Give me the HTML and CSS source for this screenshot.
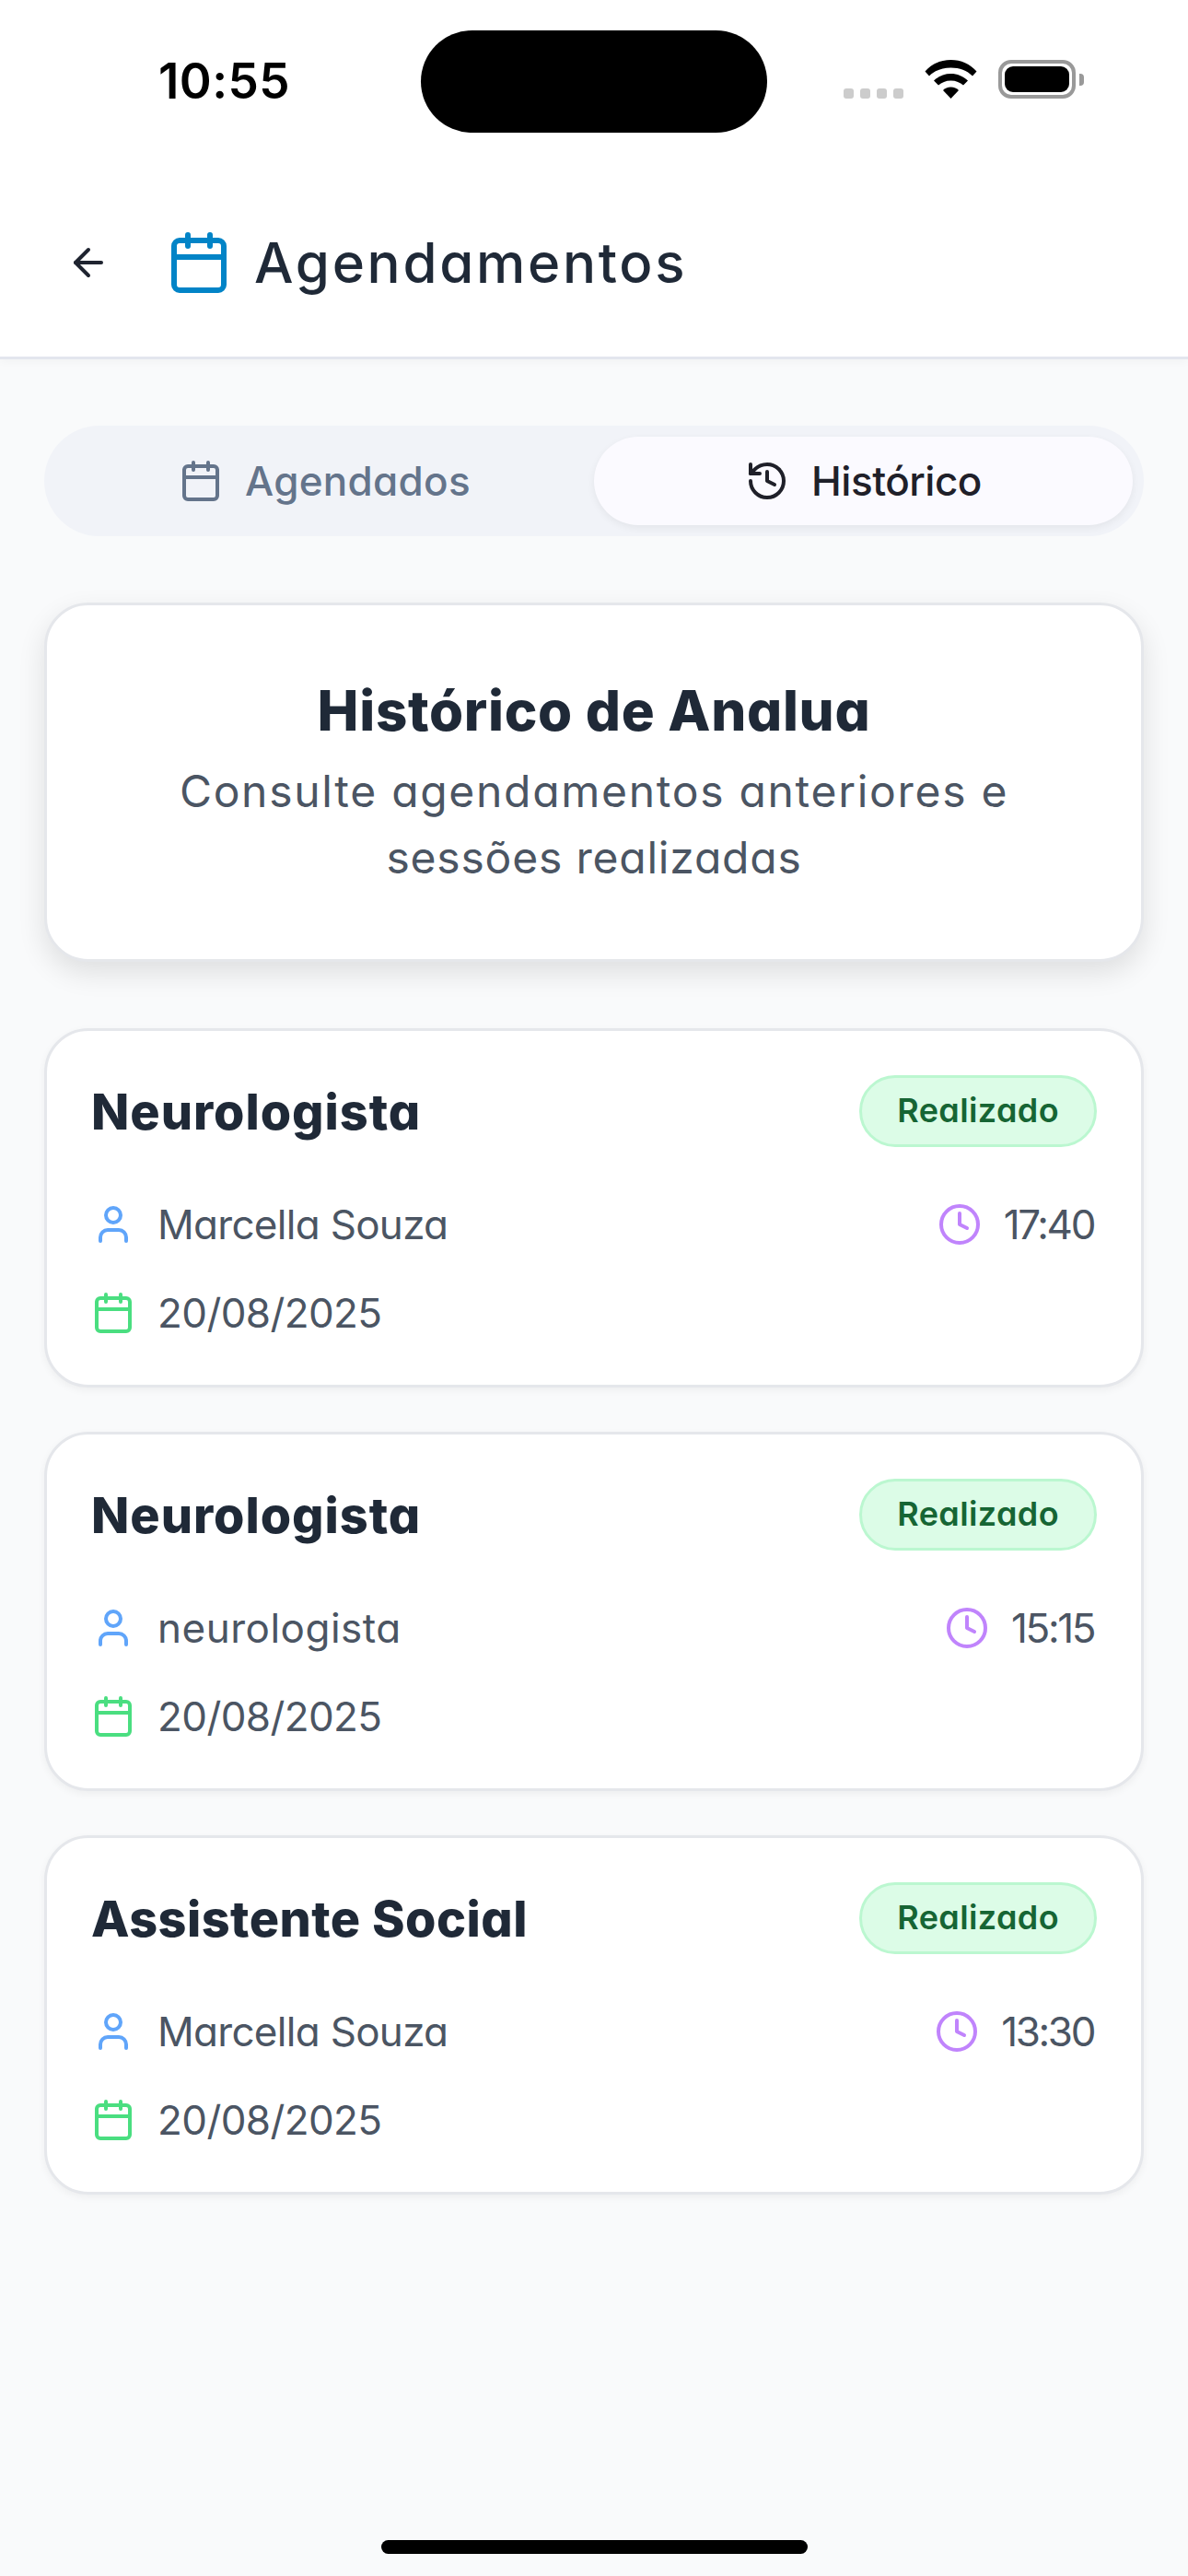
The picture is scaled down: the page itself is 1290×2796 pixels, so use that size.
FILE: index.html
```html
<!DOCTYPE html>
<html lang="pt-BR">
<head>
<meta charset="utf-8">
<title>Agendamentos</title>
<link rel="stylesheet" href="styles.css">
</head>
<body>
<svg class="defs" width="0" height="0" aria-hidden="true">
  <symbol id="i-cal" viewBox="0 0 24 24"><path d="M8 2v4M16 2v4"/><rect x="3" y="4" width="18" height="18" rx="2"/><path d="M3 10h18"/></symbol>
  <symbol id="i-user" viewBox="0 0 24 24"><path d="M19 21v-2a4 4 0 0 0-4-4H9a4 4 0 0 0-4 4v2"/><circle cx="12" cy="7" r="4"/></symbol>
  <symbol id="i-clock" viewBox="0 0 24 24"><circle cx="12" cy="12" r="10"/><path d="M12 6v6l4 2"/></symbol>
  <symbol id="i-hist" viewBox="0 0 24 24"><path d="M3 12a9 9 0 1 0 9-9 9.75 9.75 0 0 0-6.74 2.74L3 8"/><path d="M3 3v5h5"/><path d="M12 7v5l4 2"/></symbol>
  <symbol id="i-back" viewBox="0 0 24 24"><path d="M12 19l-7-7 7-7"/><path d="M19 12H5"/></symbol>
</svg>
<div class="page">
  <header class="top">
    <div class="status">
      <span class="time">10:55</span>
      <div class="island"></div>
      <div class="sys">
        <div class="dots"><i></i><i></i><i></i><i></i></div>
        <svg class="wifi" width="57" height="42" viewBox="0 0 57 42"><path d="M28.5 0C17.5 0 7.5 4.5.5 12.5L5 17.5C11 11.5 19 8.5 28.5 8.5S46 11.500 52 17.5L56.500 12.500C49.500 4.500 39.500 0 28.500 0Z"/><path d="M28.500 15C21.500 15 15.500 17.500 10 22.500L15 27.500C18.500 24.500 23 22.500 28.500 22.500S38.500 24.500 42 27.500L47 22.500C41.500 17.500 35.500 15 28.500 15Z"/><path d="M28.500 29.500C25 29.500 22 31 20 33L28.500 42 37 33C35 31 32 29.500 28.500 29.500Z"/></svg>
        <div class="battery"><div class="battery-fill"></div><div class="battery-nub"></div></div>
      </div>
    </div>
    <div class="appbar">
      <svg class="ic ic-back"><use href="#i-back"/></svg>
      <svg class="ic ic-title"><use href="#i-cal"/></svg>
      <h1 class="page-title">Agendamentos</h1>
    </div>
  </header>

  <main class="content">
    <div class="tabs">
      <div class="tab">
        <svg class="ic ic-row"><use href="#i-cal"/></svg>
        <span class="tab-label tab-label-a">Agendados</span>
      </div>
      <div class="tab tab-active">
        <svg class="ic ic-row"><use href="#i-hist"/></svg>
        <span class="tab-label tab-label-h">Histórico</span>
      </div>
    </div>

    <section class="hero">
      <h2 class="hero-title">Histórico de Analua</h2>
      <p class="hero-sub">Consulte agendamentos anteriores e<br><span class="hero-sub-2">sessões realizadas</span></p>
    </section>

    <div class="list">
      <article class="card">
        <div class="card-head"><h3 class="card-title card-title-neuro">Neurologista</h3><span class="badge">Realizado</span></div>
        <div class="rows">
          <div class="row">
            <div class="meta"><svg class="ic ic-row c-blue"><use href="#i-user"/></svg><span class="meta-text t-name">Marcella Souza</span></div>
            <div class="meta"><svg class="ic ic-row c-purple"><use href="#i-clock"/></svg><span class="meta-text t-time">17:40</span></div>
          </div>
          <div class="row">
            <div class="meta"><svg class="ic ic-row c-green"><use href="#i-cal"/></svg><span class="meta-text t-date">20/08/2025</span></div>
          </div>
        </div>
      </article>

      <article class="card">
        <div class="card-head"><h3 class="card-title card-title-neuro">Neurologista</h3><span class="badge">Realizado</span></div>
        <div class="rows">
          <div class="row">
            <div class="meta"><svg class="ic ic-row c-blue"><use href="#i-user"/></svg><span class="meta-text t-lower">neurologista</span></div>
            <div class="meta"><svg class="ic ic-row c-purple"><use href="#i-clock"/></svg><span class="meta-text t-time">15:15</span></div>
          </div>
          <div class="row">
            <div class="meta"><svg class="ic ic-row c-green"><use href="#i-cal"/></svg><span class="meta-text t-date">20/08/2025</span></div>
          </div>
        </div>
      </article>

      <article class="card">
        <div class="card-head"><h3 class="card-title">Assistente Social</h3><span class="badge">Realizado</span></div>
        <div class="rows">
          <div class="row">
            <div class="meta"><svg class="ic ic-row c-blue"><use href="#i-user"/></svg><span class="meta-text t-name">Marcella Souza</span></div>
            <div class="meta"><svg class="ic ic-row c-purple"><use href="#i-clock"/></svg><span class="meta-text t-time">13:30</span></div>
          </div>
          <div class="row">
            <div class="meta"><svg class="ic ic-row c-green"><use href="#i-cal"/></svg><span class="meta-text t-date">20/08/2025</span></div>
          </div>
        </div>
      </article>
    </div>
  </main>

  <div class="home-wrap"><div class="home-bar"></div></div>
</div>
</body>
</html>
```

FILE: styles.css
```css
* { box-sizing: border-box; }
html, body { margin: 0; padding: 0; }
body {
  background: #f9fafb;
  font-family: "Inter", "Noto Sans", sans-serif;
  font-feature-settings: "cv11" 1;
  color: #1f2937;
}
.defs { position: absolute; }
.page { display: flex; flex-direction: column; width: 1290px; height: 2796px; overflow: hidden; }

.top { position: relative; background: #fff; border-bottom: 3px solid #e3e6ee; height: 390px; flex: none; box-shadow: 0 3px 9px rgba(0, 0, 0, .03); }
.status { display: flex; align-items: flex-start; height: 183px; padding-left: 172px; }
.time { width: 285px; margin-top: 58px; font-size: 53px; line-height: 60px; font-weight: 600; color: #000; letter-spacing: .4px; font-feature-settings: normal; }
.island { width: 376px; height: 111px; margin-top: 33px; border-radius: 56px; background: #000; }
.sys { display: flex; align-items: flex-end; gap: 23px; margin-top: 65px; margin-left: 83px; }
.dots { display: flex; gap: 7px; }
.dots i { display: block; width: 11px; height: 11px; border-radius: 3px; background: #ccc; }
.wifi { display: block; fill: #000; }
.battery { position: relative; width: 84px; height: 42px; border: 4px solid #999; border-radius: 14px; padding: 3px 3px; }
.battery-fill { height: 100%; background: #000; border-radius: 9px; }
.battery-nub { position: absolute; left: 84px; top: 11px; width: 5px; height: 13px; background: #999; border-radius: 0 4px 4px 0; }

.appbar { display: flex; align-items: center; height: 204px; padding-left: 72px; }
.ic { display: block; flex: none; fill: none; stroke: currentColor; stroke-width: 2; stroke-linecap: round; stroke-linejoin: round; }
.ic-back { width: 48px; height: 48px; color: #1f2430; }
.ic-title { width: 72px; height: 72px; margin-left: 60px; color: #0284c7; }
.page-title { margin: 0 0 0 24px; font-size: 60px; line-height: 84px; font-weight: 500; color: #1f2937; letter-spacing: 2.7px; }

.content { flex: 1; padding: 72px 48px 0; }
.tabs { display: grid; grid-template-columns: 1fr 1fr; height: 120px; padding: 12px; border-radius: 60px; background: #f1f3f8; }
.tab { display: flex; align-items: center; justify-content: center; gap: 24px; border-radius: 48px; color: #64748b; }
.tab-active { background: #fbfaff; color: #1f2029; box-shadow: 0 3px 9px rgba(0, 0, 0, .06); }
.tab-label { font-size: 44px; line-height: 60px; font-weight: 500; }
.tab-label-a { letter-spacing: .3px; }
.tab-label-h { letter-spacing: -.5px; }

.hero { margin-top: 72px; padding: 72px 48px; background: #fff; border: 3px solid #e5e7eb; border-radius: 48px; box-shadow: 0 12px 30px rgba(0, 0, 0, .11); text-align: center; }
.hero-title { margin: 0 0 12px; font-size: 60px; line-height: 84px; font-weight: 800; color: #1f2937; letter-spacing: .7px; }
.hero-sub { margin: -2px 0 2px; font-size: 48px; line-height: 72px; font-weight: 400; color: #4b5563; letter-spacing: 1.7px; }
.hero-sub-2 { letter-spacing: .8px; }

.list { display: flex; flex-direction: column; gap: 48px; margin-top: 72px; }
.card { padding: 48px; height: 390px; background: #fff; border: 3px solid #e5e7eb; border-radius: 48px; box-shadow: 0 3px 9px rgba(0, 0, 0, .05); }
.card-head { display: flex; align-items: center; justify-content: space-between; height: 78px; margin-bottom: 54px; }
.card-title { margin: 2px 0 0; font-size: 54px; line-height: 78px; font-weight: 800; color: #1f2937; letter-spacing: .45px; }
.card-title-neuro { letter-spacing: .95px; }
.badge { display: block; height: 78px; padding: 0 38px; border: 3px solid #bbf7d0; border-radius: 39px; background: #dcfce7; color: #166534; font-size: 36px; line-height: 70px; font-weight: 600; letter-spacing: .4px; }
.rows { display: flex; flex-direction: column; gap: 36px; }
.row { display: flex; align-items: center; justify-content: space-between; height: 60px; }
.meta { display: flex; align-items: center; gap: 24px; }
.meta-text { font-size: 44px; line-height: 60px; font-weight: 400; color: #4b5563; }
.t-name { letter-spacing: -.7px; }
.t-lower { letter-spacing: .5px; }
.t-date { letter-spacing: -.6px; }
.t-time { letter-spacing: -2.4px; padding-right: 3px; }
.ic-row { width: 48px; height: 48px; }
.c-blue { color: #60a5fa; }
.c-purple { color: #c084fc; }
.c-green { color: #4ade80; }

.home-wrap { display: flex; justify-content: center; height: 39px; flex: none; }
.home-bar { width: 463px; height: 15px; border-radius: 8px; background: #000; }
```
